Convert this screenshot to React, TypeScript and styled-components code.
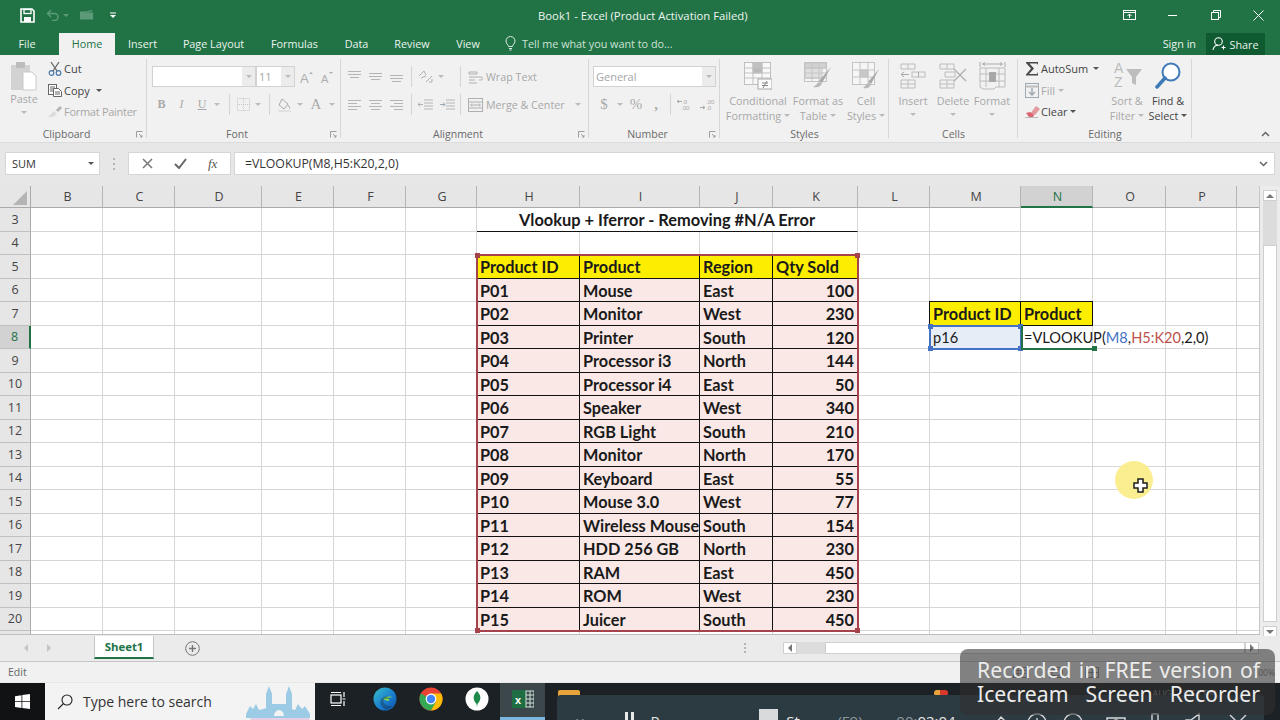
import React from "react";
import styled, { createGlobalStyle } from "styled-components";

const Global = createGlobalStyle`
  html, body { margin: 0; padding: 0; background: #fff; overflow: hidden; }
  * { box-sizing: border-box; }
`;

const UI = `"Open Sans", "Noto Sans", sans-serif`;
const CELL = `Lato, "Liberation Sans", sans-serif`;

const Page = styled.div`
  position: relative;
  width: 1280px;
  height: 720px;
  overflow: hidden;
  display: flex;
  flex-direction: column;
  font-family: ${UI};
  font-size: 11px;
  color: #444;
`;

/* Title bar */
const TitleBar = styled.div`
  height: 30px;
  flex: none;
  background: #217346;
  display: flex;
  align-items: center;
  color: #fff;
`;
const Quick = styled.div`
  width: 456px;
  padding-left: 20px;
  display: flex;
  align-items: center;
  flex: none;
`;
const Title = styled.div`
  width: 350px;
  padding-left: 82px;
  font-size: 11.3px;
  color: #eef5f0;
  white-space: nowrap;
  flex: none;
`;
const WinButtons = styled.div`
  margin-left: auto;
  display: flex;
  align-items: center;
`;
const WinButton = styled.div<{ $w: number }>`
  width: ${(p) => p.$w}px;
  display: flex;
  justify-content: center;
  align-items: center;
`;

/* Tabs */
const TabRow = styled.div`
  height: 25px;
  flex: none;
  background: #217346;
  display: flex;
  align-items: flex-end;
  color: #eaf3ed;
`;
const Tab = styled.div<{ $w: number; $active?: boolean }>`
  width: ${(p) => p.$w}px;
  height: 22px;
  line-height: 21px;
  text-align: center;
  font-size: 10.8px;
  white-space: nowrap;
  background: ${(p) => (p.$active ? "#f1f1f1" : "transparent")};
  color: ${(p) => (p.$active ? "#217346" : "inherit")};
`;
const FileTab = styled(Tab)`
  padding-right: 5px;
`;
const TellMe = styled.div`
  display: flex;
  align-items: center;
  gap: 6px;
  height: 22px;
  margin-left: 12px;
  margin-bottom: 1px;
  font-size: 10.8px;
  color: #cfe2d6;
`;
const SignIn = styled.div`
  margin-left: auto;
  height: 22px;
  line-height: 21px;
  padding-right: 10px;
  font-size: 10.8px;
`;
const Share = styled.div`
  width: 59px;
  height: 22px;
  margin-right: 15px;
  background: #0f5a30;
  display: flex;
  align-items: center;
  justify-content: center;
  gap: 3px;
  font-size: 10.8px;
`;

/* Ribbon */
const Ribbon = styled.div`
  height: 88px;
  flex: none;
  padding-top: 3px;
  background: #f1f1f1;
  display: flex;
  border-bottom: 1px solid #dcdcdc;
`;
const Group = styled.div<{ $w: number }>`
  position: relative;
  width: ${(p) => p.$w}px;
  flex: none;
  display: flex;
  flex-direction: column;
  &::after {
    content: "";
    position: absolute;
    right: 0;
    top: 1px;
    bottom: 4px;
    width: 1px;
    background: #d6d6d6;
  }
`;
const GroupBody = styled.div<{ $pl?: number; $pt?: number }>`
  flex: 1;
  min-height: 0;
  display: flex;
  padding-left: ${(p) => p.$pl ?? 0}px;
  padding-top: ${(p) => p.$pt ?? 0}px;
`;
const Stack = styled.div<{ $gap?: number; $w?: number }>`
  display: flex;
  flex-direction: column;
  gap: ${(p) => p.$gap ?? 0}px;
  ${(p) => (p.$w ? `width: ${p.$w}px; flex: none;` : "")}
`;
const GroupLabel = styled.div<{ $launch?: boolean }>`
  position: relative;
  height: 15px;
  flex: none;
  padding-right: ${(p) => (p.$launch ? 14 : 0)}px;
  text-align: center;
  line-height: 15px;
  font-size: 10.5px;
  color: #6a6a6a;
`;
const Launcher = styled.span`
  position: absolute;
  right: 4px;
  top: 4px;
  display: flex;
`;
const PasteCol = styled.div`
  width: 28px;
  margin-right: 9px;
  padding-top: 3px;
  display: flex;
  flex-direction: column;
  align-items: center;
  color: #a5a5a5;
`;
const BtnLine = styled.div<{ $dark?: boolean }>`
  height: 15px;
  line-height: 15px;
  white-space: nowrap;
  text-align: center;
  font-size: 10.8px;
  color: ${(p) => (p.$dark ? "#444" : "#a8a8a8")};
  display: flex;
  align-items: center;
  justify-content: center;
  gap: 3px;
`;
const SmallRow = styled.div<{ $dark?: boolean; $tight?: boolean }>`
  height: 21.5px;
  display: flex;
  align-items: center;
  gap: 1px;
  white-space: nowrap;
  font-size: 11px;
  letter-spacing: ${(p) => (p.$tight ? "-0.28px" : "0")};
  color: ${(p) => (p.$dark ? "#444" : "#a8a8a8")};
`;
const IconBox = styled.span<{ $w?: number }>`
  width: ${(p) => p.$w ?? 16}px;
  flex: none;
  display: flex;
  justify-content: center;
  align-items: center;
`;
const ToolRow = styled.div`
  height: 21px;
  display: flex;
  align-items: center;
`;
const Slot = styled.span<{ $w: number; $bold?: boolean; $italic?: boolean; $size?: number; $end?: boolean }>`
  width: ${(p) => p.$w}px;
  flex: none;
  display: flex;
  align-items: center;
  justify-content: ${(p) => (p.$end ? "flex-end" : "center")};
  color: #aaa;
  font-family: "Liberation Serif", serif;
  font-size: ${(p) => p.$size ?? 12}px;
  font-weight: ${(p) => (p.$bold ? 700 : 400)};
  font-style: ${(p) => (p.$italic ? "italic" : "normal")};
`;
const VLine = styled.span`
  width: 1px;
  height: 21px;
  background: #d4d4d4;
`;
const SelectBox = styled.div<{ $w: number }>`
  width: ${(p) => p.$w}px;
  height: 21px;
  flex: none;
  display: flex;
  background: #fff;
  border: 1px solid #d2d2d2;
  padding-left: 2px;
  line-height: 19px;
  font-size: 11px;
  color: #a5a5a5;
`;
const SelectText = styled.span`
  flex: 1;
`;
const SelectArrow = styled.span`
  width: 13px;
  flex: none;
  background: #ececec;
  display: flex;
  align-items: center;
  justify-content: center;
`;
const TextTool = styled.span`
  font-size: 10.7px;
  color: #a8a8a8;
  white-space: nowrap;
  display: flex;
  align-items: center;
  gap: 3px;
`;
const BigButton = styled.div<{ $w: number }>`
  width: ${(p) => p.$w}px;
  flex: none;
  display: flex;
  flex-direction: column;
  align-items: center;
`;
const BigIcon = styled.div`
  height: 35px;
  display: flex;
  align-items: center;
  justify-content: center;
`;
const CaretLine = styled.div`
  height: 13px;
  display: flex;
  align-items: center;
  justify-content: center;
`;
const Collapse = styled.div`
  margin-left: auto;
  align-self: flex-end;
  padding: 0 10px 5px 0;
  display: flex;
`;
const CaretShape = styled.span<{ $dark?: boolean; $green?: boolean }>`
  width: 0;
  height: 0;
  flex: none;
  border-left: 3px solid transparent;
  border-right: 3px solid transparent;
  border-top: 3px solid ${(p) => (p.$green ? "#5c9a78" : p.$dark ? "#555" : "#bbb")};
`;
const UndoGroup = styled.span`
  width: 45px;
  flex: none;
  display: flex;
  align-items: center;
  justify-content: center;
  gap: 3px;
`;

/* Formula bar */
const FormulaBar = styled.div`
  height: 43px;
  flex: none;
  background: #e7e7e7;
  padding: 9px 5px 11px 5px;
  display: flex;
  align-items: stretch;
`;
const NameBox = styled.div`
  width: 95px;
  flex: none;
  background: #fff;
  border: 1px solid #d6d6d6;
  padding: 0 5px 0 6px;
  display: flex;
  align-items: center;
  justify-content: space-between;
  font-size: 11px;
  color: #333;
`;
const Grip = styled.div`
  width: 28px;
  flex: none;
  display: flex;
  flex-direction: column;
  align-items: center;
  justify-content: center;
  gap: 3px;
  & > span { width: 2px; height: 2px; background: #b5b5b5; }
`;
const FxBox = styled.div`
  width: 103px;
  flex: none;
  background: #fff;
  border: 1px solid #d6d6d6;
  margin-right: 3px;
  display: flex;
  align-items: center;
  justify-content: space-around;
  padding: 0 2px;
`;
const FxText = styled.span`
  font-family: "Liberation Serif", serif;
  font-style: italic;
  font-size: 13px;
  color: #555;
`;
const FormulaInput = styled.div`
  flex: 1;
  background: #fff;
  border: 1px solid #d6d6d6;
  padding: 0 6px 0 10px;
  display: flex;
  align-items: center;
  justify-content: space-between;
  font-size: 12.3px;
  color: #333;
`;

/* Sheet */
const SheetArea = styled.div`
  height: 450px;
  flex: none;
  display: flex;
  background: #ececec;
`;
const Grid = styled.div`
  position: relative;
  width: 1260px;
  height: 449px;
  flex: none;
  overflow: hidden;
  background: #fff;
  border-bottom: 1px solid #bdbdbd;
  border-right: 1px solid #c6c6c6;
  display: grid;
  grid-template-columns: 31px 72px 72px 87px 72px 72px 71px 103px 120px 73px 85px 72px 91px 72px 73px 71px 23px;
  grid-template-rows: 22px repeat(18, 23.5px) 12px;
  font-family: ${CELL};
`;
const Corner = styled.div`
  background: #e6e6e6;
  border-right: 1px solid #aaa;
  border-bottom: 1px solid #aaa;
  display: flex;
  justify-content: flex-end;
  align-items: flex-end;
  padding: 0 3px 2px 0;
`;
const ColHead = styled.div<{ $on?: boolean }>`
  background: ${(p) => (p.$on ? "#d2d2d2" : "#e6e6e6")};
  color: ${(p) => (p.$on ? "#217346" : "#444")};
  border-right: 1px solid #b5b5b5;
  border-bottom: ${(p) => (p.$on ? "2px solid #217346" : "1px solid #aaa")};
  padding-left: 2px;
  display: flex;
  align-items: center;
  justify-content: center;
  font-family: ${UI};
  font-size: 12.5px;
`;
const RowHead = styled.div<{ $on?: boolean }>`
  background: ${(p) => (p.$on ? "#d2d2d2" : "#e6e6e6")};
  color: ${(p) => (p.$on ? "#217346" : "#444")};
  border-right: ${(p) => (p.$on ? "2px solid #217346" : "1px solid #aaa")};
  border-bottom: 1px solid #c0c0c0;
  display: flex;
  align-items: center;
  justify-content: center;
  font-family: ${UI};
  font-size: 12.5px;
`;
type Tone = "plain" | "title" | "head" | "body" | "tag" | "sel" | "formula";
const Cell = styled.div<{ $tone: Tone; $num?: boolean }>`
  display: flex;
  align-items: center;
  min-width: 0;
  padding: ${(p) => (p.$tone === "formula" || p.$tone === "sel" ? "2px" : "1px")} 3px 0;
  white-space: nowrap;
  overflow: ${(p) => (p.$tone === "formula" ? "visible" : "hidden")};
  justify-content: ${(p) => (p.$num ? "flex-end" : p.$tone === "title" ? "center" : "flex-start")};
  font-size: ${(p) => (p.$tone === "formula" || p.$tone === "sel" ? "14.6px" : "16.3px")};
  font-weight: ${(p) => (p.$tone === "formula" || p.$tone === "sel" ? 400 : 700)};
  color: #1a1a1a;
  border-right: 1px solid ${(p) =>
    p.$tone === "head" || p.$tone === "body" || p.$tone === "tag" ? "#111" : "#d6d6d6"};
  border-bottom: 1px solid ${(p) =>
    p.$tone === "head" || p.$tone === "body" || p.$tone === "title" || p.$tone === "tag"
      ? "#111"
      : "#d6d6d6"};
  background: ${(p) =>
    p.$tone === "head" || p.$tone === "tag"
      ? "#fdee00"
      : p.$tone === "body"
        ? "#f9e8e6"
        : p.$tone === "sel"
          ? "#e7edf7"
          : "#fff"};
  ${(p) => (p.$tone === "title" ? "grid-column: span 4; font-size: 16.4px;" : "")}
  ${(p) => (p.$tone === "formula" ? "position: relative; z-index: 2; background: transparent;" : "")}
`;
const Ref1 = styled.span`color: #4472c4;`;
const Ref2 = styled.span`color: #c0504d;`;

const RangeBox = styled.div`
  position: absolute;
  grid-column: 8 / 12;
  grid-row: 4 / 20;
  inset: -1px;
  border: 2px solid #a5434d;
  z-index: 3;
`;
const TagFrame = styled.div`
  position: absolute;
  grid-column: 13 / 15;
  grid-row: 6 / 7;
  inset: -1px 0 0 -1px;
  border: 1px solid #111;
  z-index: 3;
`;
const RefBox = styled.div`
  position: absolute;
  grid-column: 13 / 14;
  grid-row: 7 / 8;
  inset: -1px;
  border: 2px solid #4472c4;
  z-index: 3;
`;
const ActiveBox = styled.div`
  position: absolute;
  grid-column: 14 / 15;
  grid-row: 7 / 8;
  inset: 0 -1px -1px 0;
  border-left: 2px solid #217346;
  border-bottom: 2px solid #217346;
  z-index: 3;
`;
const Handle = styled.i<{ $color: string; $x: "l" | "r"; $y: "t" | "b" }>`
  position: absolute;
  width: 5px;
  height: 5px;
  background: ${(p) => p.$color};
  ${(p) => (p.$x === "l" ? "left: -3px;" : "right: -3px;")}
  ${(p) => (p.$y === "t" ? "top: -3px;" : "bottom: -3px;")}
`;
const VScroll = styled.div`
  flex: 1;
  display: flex;
  flex-direction: column;
  align-items: center;
  padding: 4px 0 0 0;
`;
const ScrollBtn = styled.div`
  width: 14px;
  height: 11px;
  flex: none;
  background: #fff;
  border: 1px solid #cfcfcf;
  display: flex;
  align-items: center;
  justify-content: center;
`;
const VTrack = styled.div`
  height: 44px;
  width: 14px;
  flex: none;
  background: #dcdcdc;
`;
const VThumb = styled.div`
  height: 377px;
  width: 14px;
  flex: none;
  background: #fff;
  border: 1px solid #cfcfcf;
  margin-bottom: 4px;
`;
const Triangle = styled.span<{ $dir: "up" | "down" | "left" | "right" }>`
  width: 0;
  height: 0;
  ${(p) =>
    p.$dir === "up"
      ? "border-left:4px solid transparent;border-right:4px solid transparent;border-bottom:4px solid #777;"
      : p.$dir === "down"
        ? "border-left:4px solid transparent;border-right:4px solid transparent;border-top:4px solid #777;"
        : p.$dir === "left"
          ? "border-top:4px solid transparent;border-bottom:4px solid transparent;border-right:4px solid #777;"
          : "border-top:4px solid transparent;border-bottom:4px solid transparent;border-left:4px solid #777;"}
`;

/* Sheet tabs */
const TabsBar = styled.div`
  height: 26px;
  flex: none;
  background: #ebebeb;
  border-bottom: 1px solid #c6c6c6;
  display: flex;
  align-items: flex-start;
`;
const NavArrows = styled.div`
  width: 94px;
  height: 24px;
  flex: none;
  padding-left: 24px;
  display: flex;
  align-items: center;
  gap: 19px;
`;
const FaintArrow = styled.span<{ $left?: boolean }>`
  width: 0;
  height: 0;
  border-top: 4px solid transparent;
  border-bottom: 4px solid transparent;
  ${(p) => (p.$left ? "border-right: 4px solid #c4c4c4;" : "border-left: 4px solid #c4c4c4;")}
`;
const SheetTab = styled.div`
  width: 60px;
  height: 23px;
  flex: none;
  background: #fff;
  border-left: 1px solid #c6c6c6;
  border-right: 1px solid #c6c6c6;
  border-bottom: 2px solid #217346;
  text-align: center;
  line-height: 21px;
  font-size: 11.4px;
  font-weight: 700;
  color: #217346;
`;
const AddSheet = styled.div`
  margin-left: 31px;
  height: 24px;
  display: flex;
  align-items: center;
`;
const HScrollWrap = styled.div`
  margin-left: auto;
  margin-right: 21px;
  height: 24px;
  display: flex;
  align-items: center;
`;
const HGrip = styled.div`
  margin-right: 37px;
  display: flex;
  flex-direction: column;
  gap: 2px;
  & > span { width: 2px; height: 2px; background: #b5b5b5; }
`;
const HBtn = styled.div`
  width: 14px;
  height: 12px;
  flex: none;
  background: #fff;
  border: 1px solid #cfcfcf;
  display: flex;
  align-items: center;
  justify-content: center;
`;
const HTrack = styled.div`
  width: 28px;
  height: 12px;
  background: #dcdcdc;
`;
const HThumb = styled.div`
  width: 420px;
  height: 12px;
  background: #fff;
  border: 1px solid #cfcfcf;
`;

/* Status */
const StatusBar = styled.div`
  height: 20px;
  flex: none;
  background: #f1f1f1;
  padding: 0 5px 0 8px;
  display: flex;
  align-items: center;
  font-size: 10.5px;
  color: #666;
`;
const StatusIcons = styled.div`
  margin-left: auto;
  display: flex;
  align-items: center;
  gap: 22px;
  color: #888;
`;
const ZoomValue = styled.span`
  margin-left: 132px;
  font-size: 8.5px;
`;

/* Taskbar */
const Taskbar = styled.div`
  height: 38px;
  flex: none;
  background: #1b2125;
  border-top: 1px solid #e8e8e8;
  display: flex;
  align-items: stretch;
  color: #fff;
`;
const Start = styled.div`
  width: 45px;
  flex: none;
  background: #101214;
  display: flex;
  align-items: center;
  justify-content: center;
`;
const SearchBox = styled.div`
  position: relative;
  width: 270px;
  flex: none;
  background: #f3f3f3;
  color: #333;
  padding-left: 12px;
  display: flex;
  align-items: center;
  gap: 10px;
  font-size: 14px;
  overflow: hidden;
`;
const Castle = styled.span`
  position: absolute;
  right: 3px;
  bottom: 0;
  display: flex;
`;
const TaskItem = styled.div<{ $w: number; $active?: boolean }>`
  width: ${(p) => p.$w}px;
  flex: none;
  display: flex;
  align-items: center;
  justify-content: center;
  background: ${(p) => (p.$active ? "#3c474c" : "transparent")};
  border-bottom: ${(p) => (p.$active ? "3px solid #7cb7df" : "none")};
  padding-bottom: ${(p) => (p.$active ? "2px" : "5px")};
`;
const Tray = styled.div`
  margin-left: auto;
  padding: 4px 63px 0 0;
  font-size: 9px;
  color: #8a8a8a;
  display: flex;
  gap: 12px;
`;
const OrangeTab = styled.div`
  position: absolute;
  left: 558px;
  top: 690px;
  width: 22px;
  height: 8px;
  background: #e8a33a;
  border-radius: 2px 2px 0 0;
`;
const RedDot = styled.div`
  position: absolute;
  left: 934px;
  top: 690px;
  width: 14px;
  height: 6px;
  border-radius: 3px;
  background: linear-gradient(90deg, #e8a33a 45%, #d9382c 45%);
`;
const RecPanel = styled.div`
  position: absolute;
  left: 557px;
  top: 695px;
  width: 707px;
  height: 40px;
  background: #2c3a42;
  border-radius: 4px;
  padding-top: 17px;
  display: flex;
  align-items: flex-start;
  color: #e8e8e8;
  font-size: 15px;
  line-height: 18px;
`;
const RecItem = styled.div<{ $w: number; $dim?: boolean }>`
  width: ${(p) => p.$w}px;
  flex: none;
  display: flex;
  justify-content: center;
  color: ${(p) => (p.$dim ? "#8b979d" : "inherit")};
  white-space: nowrap;
`;
const DimText = styled.span`
  color: #8b979d;
`;
const Watermark = styled.div`
  position: absolute;
  left: 960px;
  top: 649px;
  width: 315px;
  height: 66px;
  border-radius: 8px;
  background: rgba(48, 48, 48, 0.58);
  padding: 9px 15px 0 17px;
  font-family: "Noto Sans", sans-serif;
  font-size: 21.2px;
  line-height: 24px;
  color: #ececec;
  white-space: nowrap;
`;
const WaterLine = styled.div`
  text-align: justify;
  text-align-last: justify;
  white-space: normal;
`;
const CursorHalo = styled.div`
  position: absolute;
  left: 1115px;
  top: 461px;
  width: 38px;
  height: 38px;
  border-radius: 50%;
  background: #fbee8c;
  opacity: 0.95;
  z-index: 5;
`;
const CursorGlyph = styled.span`
  position: absolute;
  left: 18px;
  top: 17px;
  display: flex;
`;
const StopSquare = styled.span`
  width: 19px;
  height: 19px;
  background: #d8dadb;
  margin-top: -3px;
  display: block;
`;

/* Icons */
const Caret = ({ dark }: { dark?: boolean }) => <CaretShape $dark={dark} />;
const G = "#b5b5b5";

const SaveIcon = () => (
  <svg width="15" height="15" viewBox="0 0 15 15">
    <path d="M1 1h11l2 2v11H1z" fill="none" stroke="#fff" strokeWidth="1.6" />
    <rect x="4" y="1.5" width="7" height="4" fill="none" stroke="#fff" strokeWidth="1.3" />
    <rect x="4" y="9" width="7" height="5" fill="#fff" />
  </svg>
);
const UndoIcon = () => (
  <svg width="14" height="12" viewBox="0 0 14 12">
    <path d="M5 1 1.5 4.5 5 8M2 4.500h6.500a3.500 3.500 0 0 1 0 7H6" fill="none" stroke="#5c9a78" strokeWidth="1.5" />
  </svg>
);
const FolderIcon = () => (
  <svg width="16" height="12" viewBox="0 0 16 12">
    <path d="M0 11V2h5l1 1h9v8z" fill="#5c9a78" />
    <path d="M2 3.500 14 1" stroke="#5c9a78" strokeWidth="1.5" />
  </svg>
);
const QatMore = () => (
  <svg width="6" height="7" viewBox="0 0 6 7">
    <path d="M0 1h6" stroke="#fff" />
    <path d="M0 3h6L3 6z" fill="#fff" />
  </svg>
);
const DisplayIcon = () => (
  <svg width="13" height="10" viewBox="0 0 13 10" fill="none" stroke="#fff">
    <rect x=".5" y=".5" width="12" height="9" />
    <path d="M.5 2.500h12M6.500 8V4M4.500 6l2-2 2 2" />
  </svg>
);
const LineIcon = ({ w = 11, d }: { w?: number; d: string }) => (
  <svg width={w} height="11" viewBox={`0 0 ${w} 11`} fill="none" stroke="#fff">
    <path d={d} />
  </svg>
);
const RestoreIcon = () => (
  <svg width="10" height="10" viewBox="0 0 10 10" fill="none" stroke="#fff">
    <rect x=".5" y="2.500" width="7" height="7" />
    <path d="M2.500 2.500v-2h7v7h-2" />
  </svg>
);
const Bulb = () => (
  <svg width="11" height="15" viewBox="0 0 11 15" fill="none" stroke="#dcebe2">
    <path d="M3.500 10.500C3.500 8.500 1 8 1 5a4.500 4.500 0 0 1 9 0c0 3-2.500 3.500-2.500 5.500zM4 12.500h3M4.500 14h2" />
  </svg>
);
const PersonPlus = () => (
  <svg width="14" height="14" viewBox="0 0 14 14" fill="none" stroke="#fff" strokeWidth="1.1">
    <circle cx="6.500" cy="4.500" r="3.800" />
    <path d="M1 13c.5-3 2.500-4.700 5-4.700M9.500 10.500h4M11.500 8.500v4" />
  </svg>
);
const PasteIcon = () => (
  <svg width="28" height="30" viewBox="0 0 28 30">
    <rect x="1" y="4" width="19" height="25" fill="#d2d2d2" />
    <rect x="6" y="1" width="9" height="6" fill="#bdbdbd" />
    <path d="M13 11h9l4 4v14H13z" fill="#fff" stroke="#cacaca" />
  </svg>
);
const ScissorsIcon = () => (
  <svg width="14" height="15" viewBox="0 0 14 15" fill="none">
    <path d="M3 1l6 9M11 1 5 10" stroke="#666" strokeWidth="1.3" />
    <circle cx="3.500" cy="12" r="2.300" stroke="#4a76a8" strokeWidth="1.2" />
    <circle cx="10.500" cy="12" r="2.300" stroke="#4a76a8" strokeWidth="1.2" />
  </svg>
);
const CopyIcon = () => (
  <svg width="14" height="13" viewBox="0 0 14 13" fill="none" stroke="#666">
    <rect x=".5" y=".5" width="8" height="10" fill="#fff" />
    <path d="M2 3h5M2 5h5M2 7h3" />
    <path d="M5.500 4.500h5l3 3v5h-8z" fill="#fff" />
    <path d="M7 8h5M7 10h5" />
  </svg>
);
const BrushIcon = () => (
  <svg width="16" height="13" viewBox="0 0 16 13">
    <path d="M1 12l6-6 3 3-4 3z" fill="#dcdcdc" />
    <path d="M9 5l4-4 2 2-4 4z" fill="#b3b3b3" />
  </svg>
);
const Launch = () => (
  <svg width="7" height="7" viewBox="0 0 7 7" fill="none" stroke="#9d9d9d">
    <path d="M.5 6.500v-6h6" />
    <path d="M3 3l3 3M6 4v2H4" />
  </svg>
);
const AIcon = ({ up }: { up?: boolean }) => (
  <svg width="15" height="16" viewBox="0 0 15 16">
    <text x="1" y="14" fontFamily="Liberation Sans" fontSize={up ? 13 : 11} fill="#aeaeae">A</text>
    <path d={up ? "M10 5l2-2 2 2z" : "M9 3l2 2 2-2z"} fill="#aeaeae" />
  </svg>
);
const BordersIcon = () => (
  <svg width="13" height="13" viewBox="0 0 13 13" fill="none" stroke="#c4c4c4" strokeDasharray="1 1">
    <rect x=".5" y=".5" width="12" height="12" />
    <path d="M6.500 0v13M0 6.500h13" />
  </svg>
);
const FillIcon = () => (
  <svg width="15" height="14" viewBox="0 0 15 14" fill="none">
    <path d="M5 1l6 5-4 5-5-4z" stroke="#aaa" />
    <path d="M11 7c1 1.500 2 2.500 1.500 3.500" stroke="#aaa" />
    <rect x="1" y="12" width="13" height="2" fill="#e2e2e2" />
  </svg>
);
const Lines = ({ rows, w = 13 }: { rows: [number, number][]; w?: number }) => (
  <svg width={w} height="13" viewBox={`0 0 ${w} 13`} stroke={G} fill="none">
    {rows.map(([a, b], i) => (
      <path key={i} d={`M${a} ${2.5 + i * 3}H${b}`} />
    ))}
  </svg>
);
const VAlign = ({ y }: { y: number }) => (
  <svg width="13" height="13" viewBox="0 0 13 13" stroke={G} fill="none">
    <path d={`M0 ${y}.5h13M0 ${y + 3}.5h13M2 ${y + 6}.5h9`} />
  </svg>
);
const OrientIcon = () => (
  <svg width="15" height="13" viewBox="0 0 15 13" fill="none" stroke="#b0b0b0">
    <path d="M1 6l5-5 2 4M3 8l5-2M8 12l6-6M11 12h3V9" />
  </svg>
);
const IndentIcon = ({ flip }: { flip?: boolean }) => (
  <svg width="15" height="13" viewBox="0 0 15 13" fill="none" stroke={flip ? "#b0b0b0" : "#9aa9b5"}>
    <path d="M6 2h9M6 5h9M6 8h9M6 11h9" stroke={G} />
    <path d={flip ? "M5 6.500H0M2 4.500l-2 2 2 2" : "M0 6.500h5M3 4.500l2 2-2 2"} />
  </svg>
);
const WrapIcon = () => (
  <svg width="15" height="14" viewBox="0 0 15 14" fill="none" stroke="#b0b0b0">
    <path d="M1 2h8v2H1zM1 7h8M1 10h6M1 13h8M9 7h4a1.500 1.500 0 0 1 0 3h-2" />
  </svg>
);
const MergeIcon = () => (
  <svg width="15" height="14" viewBox="0 0 15 14" fill="none" stroke="#b0b0b0">
    <rect x=".5" y=".5" width="14" height="13" />
    <path d="M.5 4h14M.5 10h14M3 7h9M4 5.500 2.500 7 4 8.500M11 5.500 12.500 7 11 8.500" />
  </svg>
);
const DecIcon = ({ more }: { more?: boolean }) => (
  <svg width="16" height="13" viewBox="0 0 16 13">
    <text x={more ? 7 : 6} y="5.500" fontFamily="Liberation Sans" fontSize="6" fill="#aaa">{more ? ".00" : ".0"}</text>
    <text x={more ? 7 : 5} y="12" fontFamily="Liberation Sans" fontSize="6" fill="#aaa">{more ? ".0" : ".00"}</text>
    <path d={more ? "M1 9.500h5M4 8l2 1.500L4 11" : "M6 3.500H1M3 2 1 3.500 3 5"} fill="none" stroke="#aaa" />
  </svg>
);
const CondIcon = () => (
  <svg width="28" height="28" viewBox="0 0 28 28" fill="none" stroke="#c0c0c0">
    <rect x=".5" y=".5" width="26" height="22" fill="#f8f8f8" />
    <rect x="9" y="1" width="9" height="5" fill="#c0c0c0" />
    <rect x="9" y="6" width="9" height="5" fill="#b8b8b8" />
    <path d="M1 6h26M1 11h26M1 16h26M9 1v22M18 1v22" />
    <rect x="14" y="17" width="14" height="10" fill="#fbfbfb" stroke="#a8a8a8" />
    <path d="M18 21h6M18 23.500h6M23 19l-4 7" stroke="#888" />
  </svg>
);
const TableIcon = () => (
  <svg width="28" height="27" viewBox="0 0 28 27" fill="none" stroke="#c4c4c4">
    <rect x=".5" y=".5" width="22" height="19" fill="#f4f4f4" />
    <rect x="1" y="1" width="21" height="5" fill="#d2d2d2" />
    <rect x="1" y="6" width="17" height="10" fill="#dfdfdf" />
    <path d="M1 6h21M1 11h21M1 16h21M8 1v18M15 1v18" />
    <path d="M27 5 15 19l3 2z" fill="#a8a8a8" stroke="none" />
    <path d="M15 20c-2 1-2 3-6 5 4 1 8 0 9-4z" fill="#b8b8b8" stroke="none" />
  </svg>
);
const CellStyleIcon = () => (
  <svg width="28" height="28" viewBox="0 0 28 28" fill="none" stroke="#c4c4c4">
    <rect x=".5" y=".5" width="22" height="22" fill="#f6f6f6" />
    <rect x="8" y="8" width="8" height="7" fill="#c8c8c8" />
    <path d="M1 8h22M1 15h22M8 1v22M16 1v22" />
    <path d="M27 7 16 20l3 2z" fill="#a8a8a8" stroke="none" />
    <path d="M16 21c-2 1-2 3-5 5 4 1 7 0 8-4z" fill="#b8b8b8" stroke="none" />
  </svg>
);
const InsertIcon = () => (
  <svg width="26" height="26" viewBox="0 0 26 26" fill="none" stroke="#bcbcbc">
    <path d="M1 1h14v5H1zM8 1v5M1 17h14v8H1zM1 21h14M8 17v8" />
    <rect x="12" y="9" width="13" height="5" />
    <path d="M18.500 9v5M1 11.500h8M4 9 1 11.500 4 14" stroke="#aaa" />
  </svg>
);
const DeleteIcon = () => (
  <svg width="28" height="26" viewBox="0 0 28 26" fill="none" stroke="#bcbcbc">
    <path d="M1 1h14v5H1zM8 1v5M1 17h14v8H1zM1 21h14M8 17v8M6 9h10v5H6z" />
    <path d="M15 6l12 12M27 6 15 18" stroke="#b0b0b0" strokeWidth="1.400" />
  </svg>
);
const FormatIcon = () => (
  <svg width="27" height="29" viewBox="0 0 27 29" fill="none" stroke="#bcbcbc">
    <path d="M1 1v5M26 1v5M4 3h19M6 1.500 3.500 3 6 4.500M21 1.500 23.500 3 21 4.500" stroke="#aaa" />
    <path d="M1 7h25v19H17l-2 2H4l-3-2z" />
    <path d="M1 13h25M1 20h25M7 7v19M20 7v19" />
    <rect x="10" y="11" width="7" height="10" fill="#a8a8a8" stroke="none" />
  </svg>
);
const SumIcon = () => (
  <svg width="14" height="15" viewBox="0 0 14 15">
    <path d="M1 1h12v3l-1-1.500H4.500L9 7.500 4 13h8l1-2v3.500H1v-1L6 7.500 1 2z" fill="#4a4a4a" />
  </svg>
);
const FillDown = () => (
  <svg width="14" height="15" viewBox="0 0 14 15" fill="none" stroke="#9fa9b3">
    <rect x=".5" y=".5" width="13" height="14" />
    <path d="M.5 3.500h13" strokeWidth="2" stroke="#bdbdbd" />
    <path d="M7 5v7M4 9l3 3 3-3" strokeWidth="1.500" />
  </svg>
);
const EraserIcon = () => (
  <svg width="15" height="13" viewBox="0 0 15 13">
    <path d="M5 9 11 1l4 3-5 6z" fill="#e29a9f" />
    <path d="M1 8l4-1 4 3-1 2H4z" fill="#d9656f" />
    <path d="M0 12.500h13" stroke="#bbb" />
  </svg>
);
const SortIcon = () => (
  <svg width="29" height="29" viewBox="0 0 29 29">
    <text x="1" y="12" fontFamily="Liberation Sans" fontSize="14" fill="#bcbcbc">A</text>
    <text x="1" y="26" fontFamily="Liberation Sans" fontSize="14" fill="#bcbcbc">Z</text>
    <path d="M13 8h16l-6 8v8l-4-2v-6z" fill="#bdbdbd" />
  </svg>
);
const FindIcon = () => (
  <svg width="27" height="28" viewBox="0 0 27 28" fill="none">
    <circle cx="16" cy="10" r="8.500" stroke="#3f7cb7" strokeWidth="2" fill="#fff" />
    <path d="M10 16 2 25" stroke="#3f7cb7" strokeWidth="3.500" strokeLinecap="round" />
  </svg>
);
const TinyX = () => (
  <svg width="11" height="11" viewBox="0 0 11 11" fill="none" stroke="#777" strokeWidth="1.500">
    <path d="M1 1l9 9M10 1l-9 9" />
  </svg>
);
const TinyCheck = () => (
  <svg width="13" height="11" viewBox="0 0 13 11" fill="none" stroke="#666" strokeWidth="2">
    <path d="M1 6l4 4 7-9" />
  </svg>
);
const CollapseIcon = ({ up }: { up?: boolean }) => (
  <svg width="9" height="6" viewBox="0 0 9 6" fill="none" stroke="#666" strokeWidth="1.500">
    <path d={up ? "M1 5l3.500-3.500L8 5" : "M1 1l3.500 3.500L8 1"} />
  </svg>
);
const PlusCircle = () => (
  <svg width="15" height="15" viewBox="0 0 15 15" fill="none" stroke="#777">
    <circle cx="7.500" cy="7.500" r="6.800" />
    <path d="M7.500 4v7M4 7.500h7" strokeWidth="1.400" />
  </svg>
);
const ViewIcon = ({ d }: { d: string }) => (
  <svg width="14" height="11" viewBox="0 0 14 11" fill="none" stroke="#8a8a8a">
    <rect x=".5" y=".5" width="13" height="10" />
    <path d={d} />
  </svg>
);
const WinLogo = () => (
  <svg width="15" height="15" viewBox="0 0 15 15" fill="#fff">
    <path d="M0 2.200 6.500 1.200v6H0zM7.300 1l7.700-1v7.200H7.300zM0 8h6.500v6L0 13zM7.300 8H15v7l-7.700-1z" />
  </svg>
);
const Magnifier = () => (
  <svg width="16" height="16" viewBox="0 0 16 16" fill="none" stroke="#222" strokeWidth="1.100">
    <circle cx="10" cy="6" r="5" />
    <path d="M6.500 9.500 1 15" />
  </svg>
);
const CastleArt = () => (
  <svg width="66" height="34" viewBox="0 0 66 34">
    <ellipse cx="34" cy="34" rx="30" ry="7" fill="#e6cfe4" />
    <g fill="#9ccbe6">
      <path d="M20 8l3-8 3 8v22h-6zM40 8l3-8 3 8v22h-6z" />
      <path d="M0 28l4-8 3 3 3-5 3 6 8-2h20l8 2 3-6 4 5 3-3 5 8v4H0z" />
      <path d="M24 18h18v10H24z" />
    </g>
    <path d="M28 30a5 6 0 0 1 10 0z" fill="#f3f3f3" />
  </svg>
);
const TaskView = () => (
  <svg width="16" height="16" viewBox="0 0 16 16" fill="none" stroke="#fff" strokeWidth="1.200">
    <rect x="1" y="4" width="10" height="8" />
    <path d="M1 1.500h10M1 14.500h10M14 1v5M14 10v5M12.500 8h3" />
  </svg>
);
const EdgeIcon = () => (
  <svg width="24" height="24" viewBox="0 0 24 24">
    <defs>
      <linearGradient id="eg" x1="0" y1="0" x2="1" y2="1">
        <stop offset="0" stopColor="#39c0c8" />
        <stop offset=".55" stopColor="#1a7fd0" />
        <stop offset="1" stopColor="#0f4fa8" />
      </linearGradient>
    </defs>
    <circle cx="12" cy="12" r="11.500" fill="url(#eg)" />
    <path d="M10 12c3-4 12-3 13.500 2-.5-3-5-5-8-3 1 1 1 3-1 3z" fill="#7fd856" />
    <path d="M12 22c-6-3-6-10-1-12 3-1 5 0 5 2h-5c-2 4 2 8 8 7-2 2-5 4-7 3z" fill="#1b2125" opacity=".35" />
  </svg>
);
const ChromeIcon = () => (
  <svg width="24" height="24" viewBox="0 0 24 24">
    <circle cx="12" cy="12" r="11.500" fill="#ea4335" />
    <path d="M12 12 1.900 6.500A11.500 11.500 0 0 0 12 23.500l5.500-7z" fill="#34a853" />
    <path d="M12 6.500h10.200A11.500 11.500 0 0 1 12 23.500l5-9z" fill="#fbbc05" />
    <circle cx="12" cy="12" r="5.400" fill="#fff" />
    <circle cx="12" cy="12" r="4.200" fill="#4285f4" />
  </svg>
);
const MongoIcon = () => (
  <svg width="24" height="24" viewBox="0 0 24 24">
    <circle cx="12" cy="12" r="11.500" fill="#fff" />
    <path d="M12 4c3 3 4 6 3 9-.6 2-2 3-2.500 4l-.5 3-.5-3c-.5-1-2-2-2.500-4-1-3 0-6 3-9z" fill="#1f8a4a" />
  </svg>
);
const ExcelIcon = () => (
  <svg width="22" height="20" viewBox="0 0 22 20">
    <rect x="0" y="1" width="14" height="18" fill="#1f6d43" />
    <rect x="14" y="2" width="8" height="16" fill="none" stroke="#cfe6d8" />
    <path d="M14 6h8M14 10h8M14 14h8M18 2v16" stroke="#cfe6d8" />
    <text x="3" y="14.500" fontFamily="Liberation Sans" fontWeight="700" fontSize="11" fill="#fff">x</text>
  </svg>
);
const CrossCursor = () => (
  <svg width="15" height="15" viewBox="0 0 15 15">
    <path d="M5 1h5v4h4v5h-4v4H5v-4H1V5h4z" fill="#fff" stroke="#111" strokeWidth="1.500" />
  </svg>
);
const PauseBars = () => (
  <svg width="12" height="12" viewBox="0 0 12 12" fill="#e8e8e8">
    <rect x="1" width="3" height="12" />
    <rect x="7" width="3" height="12" />
  </svg>
);
const OutlineIcon = ({ d }: { d: string }) => (
  <svg width="22" height="22" viewBox="0 0 22 22" fill="none" stroke="#d9d9d9" strokeWidth="1.400">
    <path d={d} />
  </svg>
);

/* Data */
const COLS = ["B", "C", "D", "E", "F", "G", "H", "I", "J", "K", "L", "M", "N", "O", "P", "Q"];
const H = 6;
const TABLE: string[][] = [
  ["P01", "Mouse", "East", "100"],
  ["P02", "Monitor", "West", "230"],
  ["P03", "Printer", "South", "120"],
  ["P04", "Processor i3", "North", "144"],
  ["P05", "Processor i4", "East", "50"],
  ["P06", "Speaker", "West", "340"],
  ["P07", "RGB Light", "South", "210"],
  ["P08", "Monitor", "North", "170"],
  ["P09", "Keyboard", "East", "55"],
  ["P10", "Mouse 3.0", "West", "77"],
  ["P11", "Wireless Mouse", "South", "154"],
  ["P12", "HDD 256 GB", "North", "230"],
  ["P13", "RAM", "East", "450"],
  ["P14", "ROM", "West", "230"],
  ["P15", "Juicer", "South", "450"],
];
const HEAD = ["Product ID", "Product", "Region", "Qty Sold"];
const M = COLS.indexOf("M");
const N = COLS.indexOf("N");

function renderRow(row: number) {
  const cells: React.ReactNode[] = [
    <RowHead key="h" $on={row === 8}>{row <= 20 ? row : ""}</RowHead>,
  ];
  COLS.forEach((name, i) => {
    const key = name;
    const inTable = i >= H && i < H + 4;
    if (row === 3 && inTable) {
      if (i === H)
        cells.push(<Cell key={key} $tone="title">Vlookup + Iferror - Removing #N/A Error</Cell>);
      return;
    }
    if (row === 5 && inTable) {
      cells.push(<Cell key={key} $tone="head">{HEAD[i - H]}</Cell>);
    } else if (row >= 6 && row <= 20 && inTable) {
      cells.push(
        <Cell key={key} $tone="body" $num={i === H + 3}>{TABLE[row - 6][i - H]}</Cell>
      );
    } else if (row === 7 && i === M) {
      cells.push(<Cell key={key} $tone="tag">Product ID</Cell>);
    } else if (row === 7 && i === N) {
      cells.push(<Cell key={key} $tone="tag">Product</Cell>);
    } else if (row === 8 && i === M) {
      cells.push(<Cell key={key} $tone="sel">p16</Cell>);
    } else if (row === 8 && i === N) {
      cells.push(
        <Cell key={key} $tone="formula">
          =VLOOKUP(<Ref1>M8</Ref1>,<Ref2>H5:K20</Ref2>,2,0)
        </Cell>
      );
    } else {
      cells.push(<Cell key={key} $tone="plain" />);
    }
  });
  return cells;
}

const ROWS = Array.from({ length: 19 }, (_, i) => i + 3);
const RED = "#a5434d";
const BLUE = "#4472c4";
const GREEN = "#217346";

export default function App() {
  return (
    <Page>
      <Global />
      <TitleBar>
        <Quick>
          <SaveIcon />
          <UndoGroup><UndoIcon /><CaretShape $green /></UndoGroup>
          <IconBox $w={14}><FolderIcon /></IconBox>
          <IconBox $w={38}><QatMore /></IconBox>
        </Quick>
        <Title>Book1 - Excel (Product Activation Failed)</Title>
        <WinButtons>
          <WinButton $w={43}><DisplayIcon /></WinButton>
          <WinButton $w={43}><LineIcon d="M1 5.500h9" /></WinButton>
          <WinButton $w={43}><RestoreIcon /></WinButton>
          <WinButton $w={43}><LineIcon d="M.5.500l10 10M10.500.500l-10 10" /></WinButton>
        </WinButtons>
      </TitleBar>
      <TabRow>
        <FileTab $w={59}>File</FileTab>
        <Tab $w={56} $active>Home</Tab>
        <Tab $w={55}>Insert</Tab>
        <Tab $w={87}>Page Layout</Tab>
        <Tab $w={75}>Formulas</Tab>
        <Tab $w={49}>Data</Tab>
        <Tab $w={62}>Review</Tab>
        <Tab $w={50}>View</Tab>
        <TellMe><Bulb /> Tell me what you want to do...</TellMe>
        <SignIn>Sign in</SignIn>
        <Share><PersonPlus /> Share</Share>
      </TabRow>

      <Ribbon>
        <Group $w={147}>
          <GroupBody $pl={10}>
            <PasteCol>
              <PasteIcon />
              <BtnLine>Paste</BtnLine>
              <CaretLine><Caret /></CaretLine>
            </PasteCol>
            <Stack>
              <SmallRow $dark><IconBox><ScissorsIcon /></IconBox>Cut</SmallRow>
              <SmallRow $dark><IconBox><CopyIcon /></IconBox>Copy<IconBox $w={16}><Caret dark /></IconBox></SmallRow>
              <SmallRow $tight><IconBox><BrushIcon /></IconBox>Format Painter</SmallRow>
            </Stack>
          </GroupBody>
          <GroupLabel $launch>Clipboard<Launcher><Launch /></Launcher></GroupLabel>
        </Group>

        <Group $w={194}>
          <GroupBody $pl={5} $pt={8}>
            <Stack $gap={7}>
              <ToolRow>
                <SelectBox $w={104}><SelectText /><SelectArrow><Caret /></SelectArrow></SelectBox>
                <SelectBox $w={39}><SelectText>11</SelectText><SelectArrow><Caret /></SelectArrow></SelectBox>
                <Slot $w={22}><AIcon up /></Slot>
                <Slot $w={21}><AIcon /></Slot>
              </ToolRow>
              <ToolRow>
                <Slot $w={19} $bold>B</Slot>
                <Slot $w={21} $italic>I</Slot>
                <Slot $w={20}><u>U</u></Slot>
                <Slot $w={10}><Caret /></Slot>
                <Slot $w={14}><VLine /></Slot>
                <Slot $w={15}><BordersIcon /></Slot>
                <Slot $w={14}><Caret /></Slot>
                <Slot $w={8}><VLine /></Slot>
                <Slot $w={22}><FillIcon /></Slot>
                <Slot $w={10}><Caret /></Slot>
                <Slot $w={22} $size={15}>A</Slot>
                <Slot $w={9}><Caret /></Slot>
              </ToolRow>
            </Stack>
          </GroupBody>
          <GroupLabel $launch>Font<Launcher><Launch /></Launcher></GroupLabel>
        </Group>

        <Group $w={248}>
          <GroupBody $pl={3} $pt={8}>
            <Stack $gap={7}>
              <ToolRow>
                <Slot $w={21}><VAlign y={1} /></Slot>
                <Slot $w={21}><VAlign y={3} /></Slot>
                <Slot $w={21}><VAlign y={5} /></Slot>
                <Slot $w={8}><VLine /></Slot>
                <Slot $w={20}><OrientIcon /></Slot>
                <Slot $w={11}><Caret /></Slot>
                <Slot $w={15} $end><VLine /></Slot>
                <Slot $w={7} />
                <TextTool><WrapIcon /> Wrap Text</TextTool>
              </ToolRow>
              <ToolRow>
                <Slot $w={21}><Lines rows={[[0, 13], [0, 9], [0, 13], [0, 9]]} /></Slot>
                <Slot $w={21}><Lines rows={[[0, 13], [2, 11], [0, 13], [2, 11]]} /></Slot>
                <Slot $w={21}><Lines rows={[[0, 13], [4, 13], [0, 13], [4, 13]]} /></Slot>
                <Slot $w={8}><VLine /></Slot>
                <Slot $w={20}><IndentIcon flip /></Slot>
                <Slot $w={24}><IndentIcon /></Slot>
                <Slot $w={2} $end><VLine /></Slot>
                <Slot $w={7} />
                <TextTool><MergeIcon /> Merge &amp; Center <IconBox $w={20}><Caret /></IconBox></TextTool>
              </ToolRow>
            </Stack>
          </GroupBody>
          <GroupLabel $launch>Alignment<Launcher><Launch /></Launcher></GroupLabel>
        </Group>

        <Group $w={131}>
          <GroupBody $pl={4} $pt={8}>
            <Stack $gap={7}>
              <ToolRow>
                <SelectBox $w={123}><SelectText>General</SelectText><SelectArrow><Caret /></SelectArrow></SelectBox>
              </ToolRow>
              <ToolRow>
                <Slot $w={22} $size={15}>$</Slot>
                <Slot $w={9}><Caret /></Slot>
                <Slot $w={24} $size={15}>%</Slot>
                <Slot $w={16} $size={15} $bold>,</Slot>
                <Slot $w={12}><VLine /></Slot>
                <Slot $w={16}><DecIcon /></Slot>
                <Slot $w={4} />
                <Slot $w={22}><DecIcon more /></Slot>
              </ToolRow>
            </Stack>
          </GroupBody>
          <GroupLabel $launch>Number<Launcher><Launch /></Launcher></GroupLabel>
        </Group>

        <Group $w={169}>
          <GroupBody $pl={8}>
            <BigButton $w={60}>
              <BigIcon><CondIcon /></BigIcon>
              <BtnLine>Conditional</BtnLine>
              <BtnLine>Formatting <Caret /></BtnLine>
            </BigButton>
            <BigButton $w={60}>
              <BigIcon><TableIcon /></BigIcon>
              <BtnLine>Format as</BtnLine>
              <BtnLine>Table <Caret /></BtnLine>
            </BigButton>
            <BigButton $w={36}>
              <BigIcon><CellStyleIcon /></BigIcon>
              <BtnLine>Cell</BtnLine>
              <BtnLine>Styles <Caret /></BtnLine>
            </BigButton>
          </GroupBody>
          <GroupLabel>Styles</GroupLabel>
        </Group>

        <Group $w={129}>
          <GroupBody $pl={4}>
            <BigButton $w={40}>
              <BigIcon><InsertIcon /></BigIcon>
              <BtnLine>Insert</BtnLine>
              <CaretLine><Caret /></CaretLine>
            </BigButton>
            <BigButton $w={40}>
              <BigIcon><DeleteIcon /></BigIcon>
              <BtnLine>Delete</BtnLine>
              <CaretLine><Caret /></CaretLine>
            </BigButton>
            <BigButton $w={38}>
              <BigIcon><FormatIcon /></BigIcon>
              <BtnLine>Format</BtnLine>
              <CaretLine><Caret /></CaretLine>
            </BigButton>
          </GroupBody>
          <GroupLabel>Cells</GroupLabel>
        </Group>

        <Group $w={174}>
          <GroupBody $pl={6}>
            <Stack $w={83}>
              <SmallRow $dark><IconBox><SumIcon /></IconBox>AutoSum<IconBox $w={14}><Caret dark /></IconBox></SmallRow>
              <SmallRow><IconBox><FillDown /></IconBox>Fill <IconBox $w={9}><Caret /></IconBox></SmallRow>
              <SmallRow $dark><IconBox><EraserIcon /></IconBox>Clear <IconBox $w={9}><Caret dark /></IconBox></SmallRow>
            </Stack>
            <BigButton $w={40}>
              <BigIcon><SortIcon /></BigIcon>
              <BtnLine>Sort &amp;</BtnLine>
              <BtnLine>Filter <Caret /></BtnLine>
            </BigButton>
            <BigButton $w={42}>
              <BigIcon><FindIcon /></BigIcon>
              <BtnLine $dark>Find &amp;</BtnLine>
              <BtnLine $dark>Select <Caret dark /></BtnLine>
            </BigButton>
          </GroupBody>
          <GroupLabel>Editing</GroupLabel>
        </Group>

        <Collapse><CollapseIcon up /></Collapse>
      </Ribbon>

      <FormulaBar>
        <NameBox>SUM <Caret dark /></NameBox>
        <Grip><span /><span /><span /></Grip>
        <FxBox><TinyX /><TinyCheck /><FxText>fx</FxText></FxBox>
        <FormulaInput>=VLOOKUP(M8,H5:K20,2,0)<CollapseIcon /></FormulaInput>
      </FormulaBar>

      <SheetArea>
        <Grid>
          <Corner>
            <svg width="14" height="14" viewBox="0 0 14 14"><path d="M14 0v14H0z" fill="#b5b5b5" /></svg>
          </Corner>
          {COLS.map((c) => (
            <ColHead key={c} $on={c === "N"}>{c === "Q" ? "" : c}</ColHead>
          ))}
          {ROWS.map((r) => (
            <React.Fragment key={r}>{renderRow(r)}</React.Fragment>
          ))}
          <RangeBox>
            <Handle $color={RED} $x="l" $y="t" />
            <Handle $color={RED} $x="r" $y="t" />
            <Handle $color={RED} $x="l" $y="b" />
            <Handle $color={RED} $x="r" $y="b" />
          </RangeBox>
          <TagFrame />
          <RefBox>
            <Handle $color={BLUE} $x="l" $y="t" />
            <Handle $color={BLUE} $x="r" $y="t" />
            <Handle $color={BLUE} $x="l" $y="b" />
            <Handle $color={BLUE} $x="r" $y="b" />
          </RefBox>
          <ActiveBox>
            <Handle $color={GREEN} $x="r" $y="b" />
          </ActiveBox>
        </Grid>
        <VScroll>
          <ScrollBtn><Triangle $dir="up" /></ScrollBtn>
          <VTrack />
          <VThumb />
          <ScrollBtn><Triangle $dir="down" /></ScrollBtn>
        </VScroll>
      </SheetArea>

      <TabsBar>
        <NavArrows><FaintArrow $left /><FaintArrow /></NavArrows>
        <SheetTab>Sheet1</SheetTab>
        <AddSheet><PlusCircle /></AddSheet>
        <HScrollWrap>
          <HGrip><span /><span /><span /></HGrip>
          <HBtn><Triangle $dir="left" /></HBtn>
          <HTrack />
          <HThumb />
          <HBtn><Triangle $dir="right" /></HBtn>
        </HScrollWrap>
      </TabsBar>

      <StatusBar>
        Edit
        <StatusIcons>
          <ViewIcon d="M.5 3.500h13M.5 6.500h13M5 .5v10M9 .5v10" />
          <ViewIcon d="M3 2.500h8v6H3z" />
          <ViewIcon d="M7 .5v10M.5 5.500h13" />
          <ZoomValue>100%</ZoomValue>
        </StatusIcons>
      </StatusBar>

      <Taskbar>
        <Start><WinLogo /></Start>
        <SearchBox>
          <Magnifier />
          Type here to search
          <Castle><CastleArt /></Castle>
        </SearchBox>
        <TaskItem $w={46}><TaskView /></TaskItem>
        <TaskItem $w={47}><EdgeIcon /></TaskItem>
        <TaskItem $w={46}><ChromeIcon /></TaskItem>
        <TaskItem $w={46}><MongoIcon /></TaskItem>
        <TaskItem $w={45} $active><ExcelIcon /></TaskItem>
        <Tray><span>AUG</span><span>9:52 PM</span></Tray>
      </Taskbar>

      <OrangeTab />
      <RedDot />
      <RecPanel>
        <RecItem $w={46}>••</RecItem>
        <RecItem $w={12} />
        <RecItem $w={30}><PauseBars /></RecItem>
        <RecItem $w={20}>P</RecItem>
        <RecItem $w={94} />
        <RecItem $w={19}><StopSquare /></RecItem>
        <RecItem $w={30}>St</RecItem>
        <RecItem $w={84} $dim>(F9)</RecItem>
        <RecItem $w={68}><DimText>00:</DimText>02:04</RecItem>
        <RecItem $w={17} />
        <RecItem $w={40}><OutlineIcon d="M4 18 15 5l3 3L7 20z" /></RecItem>
        <RecItem $w={40}><OutlineIcon d="M11 2a9 9 0 1 0 .01 0M11 6v6" /></RecItem>
        <RecItem $w={32} $dim><OutlineIcon d="M11 2a9 9 0 1 0 .01 0" /></RecItem>
        <RecItem $w={54}><OutlineIcon d="M2 6h18v14H2zM11 8a4 4 0 1 0 .01 0" /></RecItem>
        <RecItem $w={24}><OutlineIcon d="M8 2h6v14H8z" /></RecItem>
        <RecItem $w={56}><OutlineIcon d="M2 8h5l8-6v18l-8-6H2z" /></RecItem>
        <RecItem $w={30}><OutlineIcon d="M3 3l16 16M19 3 3 19" /></RecItem>
      </RecPanel>

      <Watermark>
        <WaterLine>Recorded in FREE version of</WaterLine>
        <WaterLine>Icecream Screen Recorder</WaterLine>
      </Watermark>

      <CursorHalo>
        <CursorGlyph><CrossCursor /></CursorGlyph>
      </CursorHalo>
    </Page>
  );
}
